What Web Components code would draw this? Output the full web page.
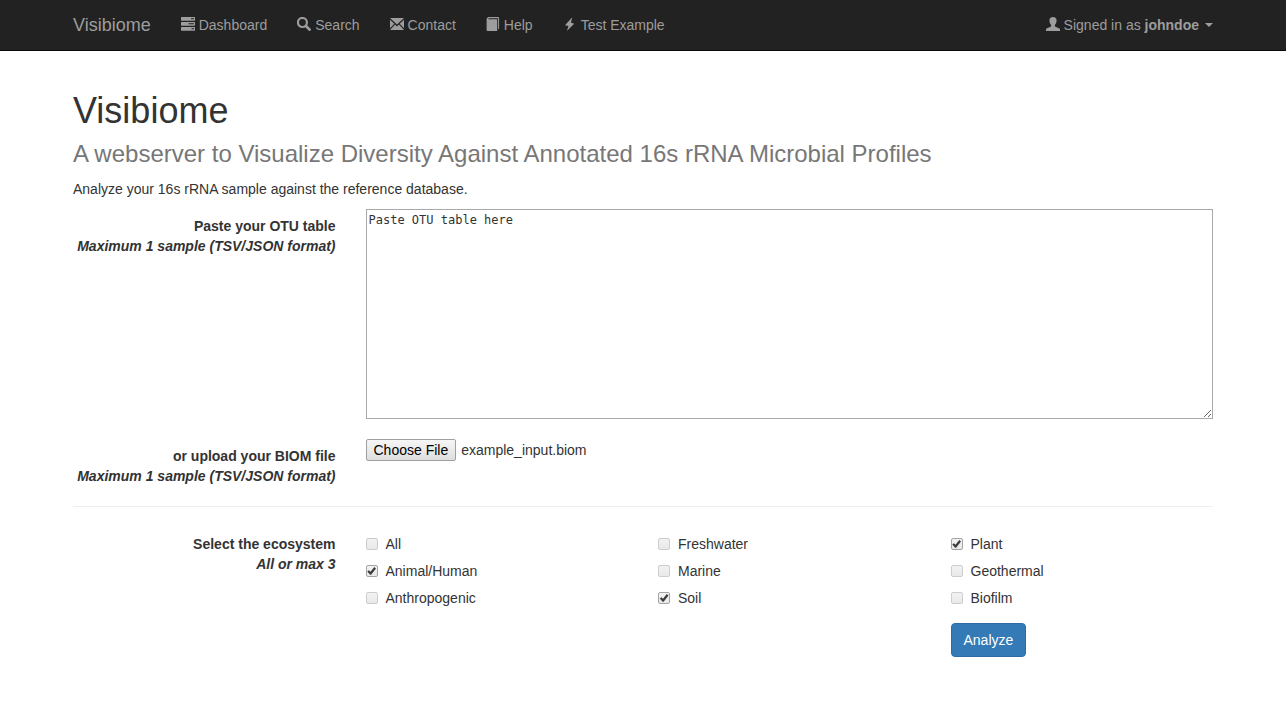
<!DOCTYPE html>
<html lang="en">
<head>
<meta charset="utf-8">
<meta name="viewport" content="width=device-width, initial-scale=1">
<title>Visibiome</title>
<style>
  body { margin: 0; background: #fff; color: #333; font: 14px/20px "Liberation Sans", Arial, sans-serif; }
</style>
</head>
<body>
<vb-navbar>
  <vb-nav-item icon="tasks">Dashboard</vb-nav-item>
  <vb-nav-item icon="search">Search</vb-nav-item>
  <vb-nav-item icon="envelope">Contact</vb-nav-item>
  <vb-nav-item icon="book">Help</vb-nav-item>
  <vb-nav-item icon="flash">Test Example</vb-nav-item>
  <vb-nav-item slot="account" icon="user" caret>Signed in as <b>johndoe</b></vb-nav-item>
</vb-navbar>
<vb-page>
  <vb-page-header>
    Visibiome
    <span slot="subtitle">A webserver to Visualize Diversity Against Annotated 16s rRNA Microbial Profiles</span>
    <span slot="lead">Analyze your 16s rRNA sample against the reference database.</span>
  </vb-page-header>
  <vb-analyze-form></vb-analyze-form>
</vb-page>

<script>
const define = (name, html, setup) => {
  const template = document.createElement('template');
  template.innerHTML = html;
  customElements.define(name, class extends HTMLElement {
    constructor() {
      super();
      this.attachShadow({ mode: 'open' }).append(template.content.cloneNode(true));
    }
    connectedCallback() { if (setup) setup(this, this.shadowRoot); }
  });
};

const icons = {
  tasks: '<path fill-rule="evenodd" d="M.4 0h13.200q.4 0 .4.4v2.900q0 .4-.4.4H.4q-.4 0-.4-.4V.4Q0 0 .4 0zM10 1.200v1h3v-1zM.4 5h13.200q.4 0 .4.4v2.900q0 .4-.4.4H.4q-.4 0-.4-.4V5.400Q0 5 .4 5zM7.500 6.200v1H13v-1zM.4 10h13.200q.4 0 .4.4v2.900q0 .4-.4.4H.4q-.4 0-.4-.4v-2.900q0-.4.4-.4zM10.500 11.200v1H13v-1z"/>',
  search: '<path fill="none" stroke="currentColor" stroke-width="2.200" d="M9.900 5.500a4.500 4.500 0 1 1-9 0 4.500 4.500 0 0 1 9 0z"/><path d="M8 9.900l1.900-1.900 4 4.100q.4.4 0 .8l-1 1q-.4.4-.8 0z"/>',
  envelope: '<path d="M0 1h14L7 7.600zM0 2.700l4.300 4.100L0 11.200zM14 2.700v8.500L9.700 6.800zM5.100 7.600L7 9.400l1.900-1.800 5.100 5.400H0z"/>',
  book: '<path d="M2.400 0h9.500q1.200 0 1.200 1.200v10.200l-1 1V1.300H3L2 2.200h9.200V14H1.500Q.6 14 .6 13V2q0-.6.5-1.100z"/>',
  flash: '<path d="M8.800.7L2 8.200l3.500.7L3.900 14 11.200 6.700 7.900 5.600 9.200.9z"/>',
  user: '<path d="M7 0q3.600 0 3.600 3.500 0 2.900-1.700 4.500v1.200q0 .4.500.6l3.600 1.500q1 .5 1 1.300V14H0v-1.400q0-.8 1-1.300l3.600-1.500q.5-.2.500-.6V8Q3.400 6.400 3.400 3.500 3.400 0 7 0z"/>'
};

define('vb-nav-item', `
  <style>
    :host { display: block; }
    a { display: flex; align-items: center; gap: 4px; padding: 15px; color: #9d9d9d; text-decoration: none; white-space: nowrap; }
    a:hover { color: #fff; }
    svg { width: 14px; height: 14px; margin-bottom: 2px; fill: currentColor; }
    i { display: none; border: 4px solid transparent; border-top-color: currentColor; border-bottom: 0; margin-left: 2px; }
    :host([caret]) i { display: block; }
  </style>
  <a href="#"><svg viewBox="0 0 14 14" aria-hidden="true"></svg><span><slot></slot></span><i></i></a>
`, (el, root) => { root.querySelector('svg').innerHTML = icons[el.getAttribute('icon')]; });

define('vb-navbar', `
  <style>
    :host { display: block; background: #222; border-bottom: 1px solid #080808; }
    nav { display: flex; max-width: 1140px; margin: 0 auto; padding: 0 15px; }
    .brand { padding: 15px 15px 15px 0; font-size: 18px; color: #9d9d9d; text-decoration: none; }
    .links { display: flex; flex: 1; }
    .account { margin-right: -15px; }
  </style>
  <nav>
    <a class="brand" href="#">Visibiome</a>
    <div class="links"><slot></slot></div>
    <div class="account"><slot name="account"></slot></div>
  </nav>
`);

define('vb-page', `
  <style>
    :host { display: block; max-width: 1140px; margin: 0 auto; padding: 40px 15px; }
  </style>
  <slot></slot>
`);

define('vb-page-header', `
  <style>
    :host { display: block; }
    h1 { margin: 0 0 10px; font-weight: 400; font-size: 36px; line-height: 40px; }
    h2 { margin: 0 0 12px; font-weight: 400; font-size: 24px; line-height: 26px; color: #777; }
    p { margin: 0 0 10px; }
  </style>
  <h1><slot></slot></h1>
  <h2><slot name="subtitle"></slot></h2>
  <p><slot name="lead"></slot></p>
`);

define('vb-form-row', `
  <style>
    :host { display: grid; grid-template-columns: minmax(0, 1fr) minmax(0, 3fr); margin: 0 -15px 20px; }
    .label { padding: 7px 15px 0; text-align: right; font-weight: 700; }
    .field { padding: 0 15px; }
  </style>
  <div class="label"><slot name="label"></slot></div>
  <div class="field"><slot></slot></div>
`);

define('vb-check', `
  <style>
    :host { display: block; }
    label { display: flex; align-items: center; gap: 8px; cursor: pointer; }
    input {
      appearance: none; box-sizing: border-box; width: 12px; height: 12px; margin: 0;
      border: 1px solid #cdcdcd; border-radius: 2px; background: linear-gradient(#f2f2f2, #e9e9e9);
      display: grid; place-items: center;
    }
    input:checked { border-color: #a4a4a4; }
    input:checked::before {
      content: ""; width: 10px; height: 10px; background: #3c3c3c;
      clip-path: polygon(8% 54%, 24% 42%, 40% 58%, 78% 10%, 95% 24%, 46% 88%, 36% 88%);
    }
  </style>
  <label><input type="checkbox"><span><slot></slot></span></label>
`, (el, root) => { root.querySelector('input').checked = el.hasAttribute('checked'); });

define('vb-analyze-form', `
  <style>
    :host { display: block; }
    label, .title { display: block; }
    textarea {
      display: block; box-sizing: border-box; width: 100%; height: 210px; margin: 0; padding: 2px;
      border: 1px solid #a9a9a9; border-radius: 0; background: #fff; color: #333;
      font: 12px/16px "DejaVu Sans Mono", monospace; resize: both;
    }
    .file { display: flex; align-items: center; gap: 5px; }
    .file button {
      height: 22px; padding: 0 7px; border: 1px solid #a0a0a0; border-radius: 2px;
      background: linear-gradient(#f6f6f6, #dedede); color: #000; font: inherit;
    }
    hr { margin: 0 0 20px; border: 0; border-top: 1px solid #eee; }
    .options {
      display: grid; grid-template-columns: repeat(3, minmax(0, 1fr)); grid-template-rows: repeat(3, auto);
      grid-auto-flow: column; gap: 7px 30px; padding-top: 7px;
    }
    .actions { display: grid; grid-template-columns: repeat(3, minmax(0, 1fr)); gap: 30px; margin-top: 15px; }
    .analyze {
      grid-column: 3; justify-self: start; padding: 6px 12px; border: 1px solid #2e6da4; border-radius: 4px;
      background: #337ab7; color: #fff; font: inherit;
    }
  </style>
  <form>
    <vb-form-row>
      <label slot="label" for="otu">Paste your OTU table<br><em>Maximum 1 sample (TSV/JSON format)</em></label>
      <textarea id="otu">Paste OTU table here</textarea>
    </vb-form-row>
    <vb-form-row>
      <label slot="label" for="choose">or upload your BIOM file<br><em>Maximum 1 sample (TSV/JSON format)</em></label>
      <div class="file">
        <input id="biom" type="file" aria-label="BIOM file" hidden>
        <button id="choose" type="button">Choose File</button>
        <output for="biom">example_input.biom</output>
      </div>
    </vb-form-row>
    <hr>
    <vb-form-row>
      <span slot="label" class="title" id="eco">Select the ecosystem<br><em>All or max 3</em></span>
      <div class="options" role="group" aria-labelledby="eco">
        <vb-check>All</vb-check>
        <vb-check checked>Animal/Human</vb-check>
        <vb-check>Anthropogenic</vb-check>
        <vb-check>Freshwater</vb-check>
        <vb-check>Marine</vb-check>
        <vb-check checked>Soil</vb-check>
        <vb-check checked>Plant</vb-check>
        <vb-check>Geothermal</vb-check>
        <vb-check>Biofilm</vb-check>
      </div>
      <div class="actions"><button class="analyze" type="submit">Analyze</button></div>
    </vb-form-row>
  </form>
`, (el, root) => {
  const file = root.querySelector('#biom');
  root.querySelector('#choose').addEventListener('click', () => file.click());
  file.addEventListener('change', () => {
    root.querySelector('output').textContent = file.files.length ? file.files[0].name : 'No file chosen';
  });
  root.querySelector('form').addEventListener('submit', event => event.preventDefault());
});
</script>
</body>
</html>
